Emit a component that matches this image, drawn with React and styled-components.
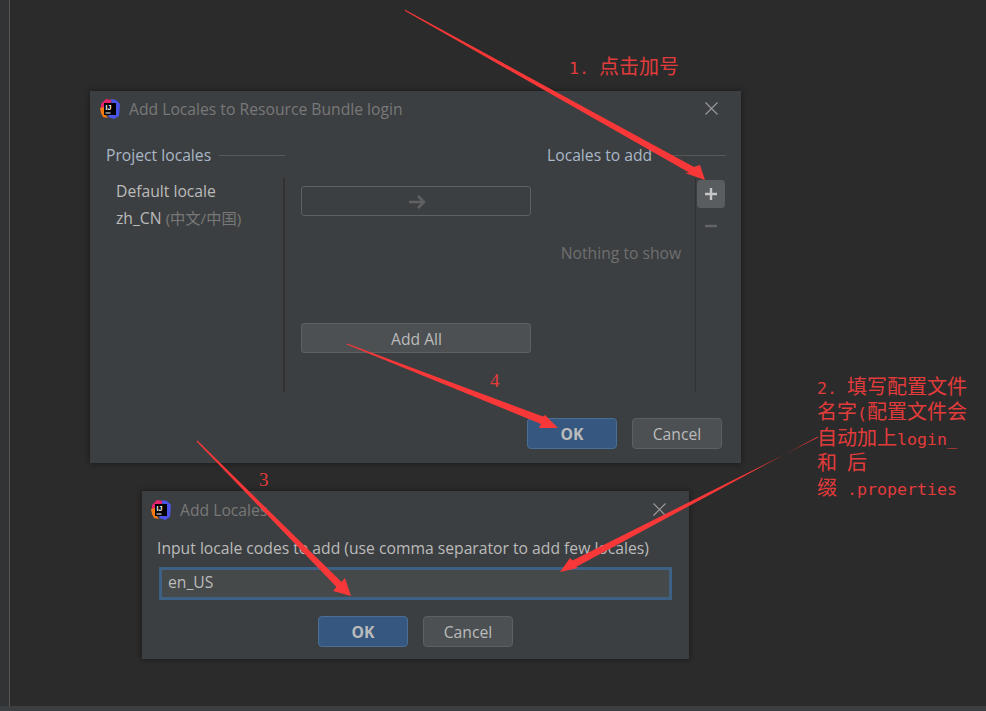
import React from "react"
import styled, { createGlobalStyle } from "styled-components"

const GlobalStyles = createGlobalStyle`
  html, body {
    margin: 0;
    height: 100%;
    background-color: #2b2b2b;
  }
  * {
    box-sizing: border-box;
  }
`

const Page = styled.div`
  position: relative;
  width: 986px;
  height: 711px;
  overflow: hidden;
  display: flex;
  flex-direction: column;
  font-family: "Open Sans", "Noto Sans CJK SC", sans-serif;
  font-size: 15.7px;
`

const Editor = styled.div`
  flex: 1;
  display: flex;
  background-color: #2b2b2b;
`

const Gutter = styled.div`
  width: 10px;
  background-color: #313335;
  border-right: 1px solid #555;
`

const StatusBar = styled.div`
  height: 5px;
  background-color: #3c3f41;
`

const Dialog = styled.div`
  position: absolute;
  left: ${(p) => p.$left}px;
  top: ${(p) => p.$top}px;
  width: ${(p) => p.$width}px;
  height: ${(p) => p.$height}px;
  display: flex;
  flex-direction: column;
  background-color: #3c3f41;
  box-shadow: 0 0 6px rgba(0, 0, 0, 0.45);
`

const TitleBar = styled.div`
  height: ${(p) => p.$height}px;
  flex: none;
  display: flex;
  align-items: center;
  padding: 0 23px 0 ${(p) => p.$inset}px;
  gap: 9px;
  color: #787878;
`

const Title = styled.div`
  flex: 1;
  white-space: nowrap;
`

const Columns = styled.div`
  flex: 1;
  display: grid;
  grid-template-columns: 179px 230px 179px;
  grid-template-rows: 18px 214px;
  column-gap: 16px;
  row-gap: 14px;
  padding: 20px 15px 0 16px;
`

const Heading = styled.div`
  display: flex;
  align-items: center;
  gap: 8px;
  color: #a9b7c6;
  white-space: nowrap;
  grid-column: ${(p) => p.$col};

  &::after {
    content: "";
    flex: 1;
    height: 1px;
    background-color: #555759;
  }
`

const LocaleList = styled.div`
  grid-column: 1;
  display: flex;
  flex-direction: column;
  gap: 7px;
  padding: 3px 0 0 10px;
  border-right: 2px solid #323232;
  color: #bbb;
`

const LocaleRow = styled.div`
  height: 20px;
  line-height: 20px;
  white-space: nowrap;
`

const Muted = styled.span`
  color: #787878;
  font-size: 15.25px;
`

const MoveColumn = styled.div`
  grid-column: 2;
  display: flex;
  flex-direction: column;
  justify-content: space-between;
  padding: 8px 0 39px;
`

const WideButton = styled.div`
  height: 30px;
  display: flex;
  align-items: center;
  justify-content: center;
  padding: 1px 0 0 1px;
  border: 1px solid #5e6060;
  border-radius: 3px;
  background-color: ${(p) => (p.$disabled ? "transparent" : "#4c5052")};
  color: #bbb;
`

const TargetPanel = styled.div`
  grid-column: 3;
  display: flex;
`

const Empty = styled.div`
  flex: 1;
  display: flex;
  justify-content: center;
  padding-top: 64px;
  color: #6f6f6f;
  white-space: nowrap;
`

const SideTools = styled.div`
  width: 31px;
  border-left: 1px solid #323232;
  display: flex;
  flex-direction: column;
  align-items: center;
  padding-top: 2px;
  gap: 4px;
`

const ToolButton = styled.div`
  width: 28px;
  height: 28px;
  display: flex;
  align-items: center;
  justify-content: center;
  border-radius: 4px;
  background-color: ${(p) => (p.$active ? "#5a5d5f" : "transparent")};
`

const Footer = styled.div`
  display: flex;
  justify-content: ${(p) => p.$align};
  gap: 15px;
  padding: ${(p) => p.$padding};
`

const ActionButton = styled.div`
  width: 90px;
  height: 31px;
  display: flex;
  align-items: center;
  justify-content: center;
  padding-top: 1px;
  border-radius: 4px;
  border: 1px solid ${(p) => (p.$primary ? "#4a6f94" : "#5e6060")};
  background-color: ${(p) => (p.$primary ? "#365880" : "#4c5052")};
  color: #bbb;
  font-weight: ${(p) => (p.$primary ? 700 : 400)};
`

const PromptBody = styled.div`
  flex: 1;
  display: flex;
  flex-direction: column;
  padding: 10px 15px 0;
`

const PromptLabel = styled.div`
  height: 20px;
  line-height: 20px;
  color: #bbb;
  white-space: nowrap;
`

const TextInput = styled.div`
  margin: 9px 2px 16px;
  height: 33px;
  display: flex;
  align-items: center;
  padding: 0 0 3px 6px;
  background-color: #45494a;
  border: 3px solid #3d6185;
  color: #bbb;
`

const Note = styled.div`
  position: absolute;
  left: ${(p) => p.$left}px;
  top: ${(p) => p.$top}px;
  color: #e23b3b;
  font-family: "Noto Sans CJK SC", sans-serif;
  font-size: 20px;
`

const NoteLine = styled.div`
  height: 25.25px;
  line-height: 25.25px;
  white-space: pre;
`

const Latin = styled.span`
  font-family: "DejaVu Sans Mono", monospace;
  font-size: 16.6px;
`

const StepNumber = styled.div`
  position: absolute;
  left: ${(p) => p.$left}px;
  top: ${(p) => p.$top}px;
  color: #e23b3b;
  font-family: "Liberation Serif", serif;
  font-size: 19px;
  line-height: 22px;
`

const ArrowLayer = styled.svg`
  position: absolute;
  left: 0;
  top: 0;
  pointer-events: none;
`

const AppIcon = () => (
  <svg width="20" height="20" viewBox="0 0 20 20">
    <polygon points="1,5 6,0 12,1 9,8 3,14 1,11" fill="#e5226b" />
    <polygon points="11,0 16,1 20,5 19,17 14,20 8,18 12,8" fill="#4a55e8" />
    <polygon points="0,9 4,8 5,15 8,19 3,18 1,14" fill="#f97a12" />
    <rect x="4" y="4" width="12" height="12" fill="#000" />
    <rect x="5.5" y="13.5" width="5" height="1" fill="#fff" />
    <text x="5.5" y="10.8" fontSize="7" fontWeight="700" fill="#fff" fontFamily="Liberation Sans, sans-serif">IJ</text>
  </svg>
)

const CloseIcon = () => (
  <svg width="13" height="13" viewBox="0 0 13 13">
    <path d="M0.5 0.5 L12.5 12.5 M12.5 0.5 L0.5 12.5" stroke="#9a9c9e" strokeWidth="1.1" fill="none" />
  </svg>
)

const ArrowRight = () => (
  <svg width="18" height="14" viewBox="0 0 18 14">
    <path d="M1 7 H16 M10 1 L16 7 L10 13" stroke="#5f6163" strokeWidth="2.6" fill="none" />
  </svg>
)

const PlusIcon = () => (
  <svg width="14" height="14" viewBox="0 0 14 14">
    <path d="M7 1 V13 M1 7 H13" stroke="#c4c6c8" strokeWidth="2.4" fill="none" />
  </svg>
)

const MinusIcon = () => (
  <svg width="14" height="14" viewBox="0 0 14 14">
    <path d="M1 7 H13" stroke="#626466" strokeWidth="2.4" fill="none" />
  </svg>
)

// tapered arrow: thin at the tail, wider at the neck, then the head
const arrows = [
  "M405 9.5 L405.6 10 L694 167 L700 165 L705 180 L685 173 L689 172.5 L404.8 10.8 Z",
  "M347 343.4 L543 416.5 L545 415 L558 428 L539 428 L541 424 L346.8 344.6 Z",
  "M197.4 440.6 L341.5 582 L345 578 L351 596 L333 591 L336.5 587 L196.6 441.4 Z",
  "M818 436.4 L576 567 L578 568 L560 572 L570 558 L572.5 560.5 L818 437.6 Z",
]

const App = () => {
  return (
    <>
      <GlobalStyles />
      <Page>
        <Editor>
          <Gutter />
        </Editor>
        <StatusBar />

        <Dialog $left={90} $top={91} $width={651} $height={372}>
          <TitleBar $height={35} $inset={10}>
            <AppIcon />
            <Title>Add Locales to Resource Bundle login</Title>
            <CloseIcon />
          </TitleBar>
          <Columns>
            <Heading $col="1">Project locales</Heading>
            <div />
            <Heading $col="3">Locales to add</Heading>
            <LocaleList>
              <LocaleRow>Default locale</LocaleRow>
              <LocaleRow>
                zh_CN <Muted>(中文/中国)</Muted>
              </LocaleRow>
            </LocaleList>
            <MoveColumn>
              <WideButton $disabled>
                <ArrowRight />
              </WideButton>
              <WideButton>Add All</WideButton>
            </MoveColumn>
            <TargetPanel>
              <Empty>Nothing to show</Empty>
              <SideTools>
                <ToolButton $active>
                  <PlusIcon />
                </ToolButton>
                <ToolButton>
                  <MinusIcon />
                </ToolButton>
              </SideTools>
            </TargetPanel>
          </Columns>
          <Footer $align="flex-end" $padding="0 19px 14px 0">
            <ActionButton $primary>OK</ActionButton>
            <ActionButton>Cancel</ActionButton>
          </Footer>
        </Dialog>

        <Dialog $left={142} $top={491} $width={547} $height={168}>
          <TitleBar $height={37} $inset={9}>
            <AppIcon />
            <Title>Add Locales</Title>
            <CloseIcon />
          </TitleBar>
          <PromptBody>
            <PromptLabel>Input locale codes to add (use comma separator to add few locales)</PromptLabel>
            <TextInput>en_US</TextInput>
            <Footer $align="center" $padding="0">
              <ActionButton $primary>OK</ActionButton>
              <ActionButton>Cancel</ActionButton>
            </Footer>
          </PromptBody>
        </Dialog>

        <ArrowLayer width="986" height="711" viewBox="0 0 986 711">
          {arrows.map((d) => (
            <path key={d} d={d} fill="#f83838" />
          ))}
        </ArrowLayer>

        <Note $left={569} $top={53}>
          <NoteLine>
            <Latin>1. </Latin>点击加号
          </NoteLine>
        </Note>
        <Note $left={817} $top={373}>
          <NoteLine>
            <Latin>2. </Latin>填写配置文件
          </NoteLine>
          <NoteLine>
            名字<Latin>(</Latin>配置文件会
          </NoteLine>
          <NoteLine>
            自动加上<Latin>login_</Latin>
          </NoteLine>
          <NoteLine>
            和<Latin> </Latin>后
          </NoteLine>
          <NoteLine>
            缀<Latin> .properties</Latin>
          </NoteLine>
        </Note>
        <StepNumber $left={259} $top={469}>3</StepNumber>
        <StepNumber $left={490} $top={370}>4</StepNumber>
      </Page>
    </>
  )
}

export default App
